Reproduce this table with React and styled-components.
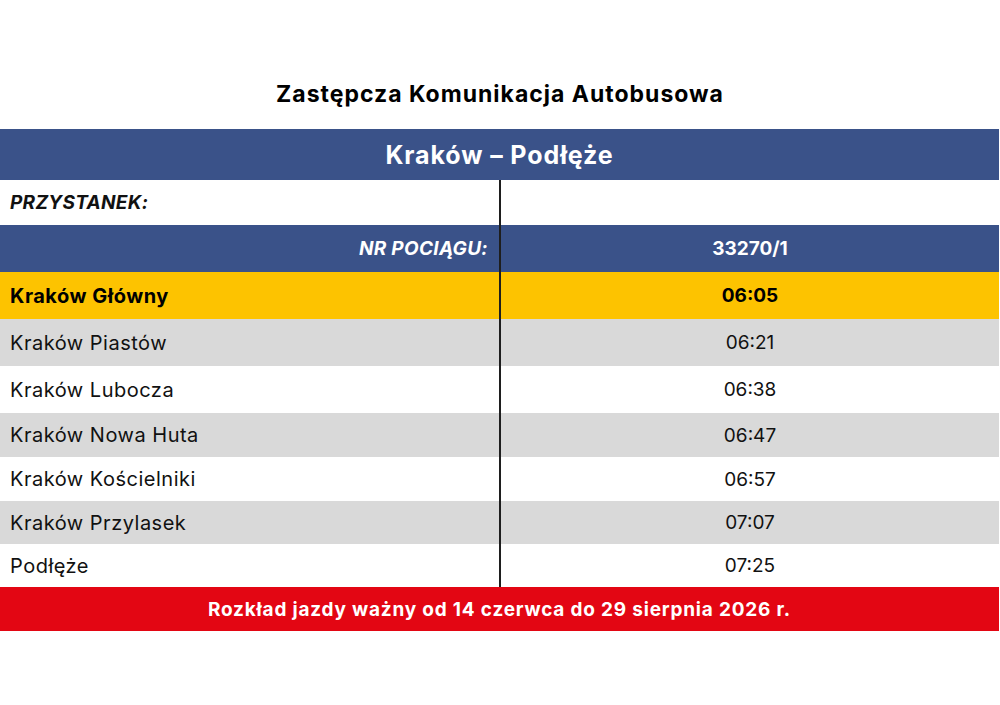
import React from 'react';
import styled, { createGlobalStyle } from 'styled-components';

const GlobalStyle = createGlobalStyle`
  body {
    margin: 0;
    background: #ffffff;
    font-family: 'Inter', 'Liberation Sans', sans-serif;
    color: #111111;
  }
`;

const blue = '#3a5289';
const yellow = '#fdc300';
const grey = '#d9d9d9';
const red = '#e30613';

const Page = styled.div`
  padding-top: 79px;
  width: 1000px;
`;

const Title = styled.h1`
  margin: 0 0 20px;
  height: 30px;
  line-height: 30px;
  font-size: 23px;
  letter-spacing: 1px;
  font-weight: 700;
  text-align: center;
  color: #000000;
`;

const Table = styled.div`
  width: 999px;
  display: flex;
  flex-direction: column;
`;

const Banner = styled.div`
  height: ${(p) => p.height}px;
  display: flex;
  align-items: center;
  justify-content: center;
  background: ${(p) => p.bg};
  color: #ffffff;
  font-weight: 700;
  font-size: ${(p) => p.size}px;
  letter-spacing: ${(p) => p.spacing}px;
`;

const Row = styled.div`
  height: ${(p) => p.height}px;
  display: flex;
  background: ${(p) => p.bg};
  color: ${(p) => p.color || '#111111'};
  font-weight: ${(p) => (p.bold ? 700 : 400)};
  font-size: 19px;
`;

const StopCell = styled.div`
  width: 501px;
  box-sizing: border-box;
  border-right: 2px solid #1e1e1e;
  display: flex;
  align-items: center;
  justify-content: ${(p) => (p.right ? 'flex-end' : 'flex-start')};
  padding: 0 ${(p) => (p.right ? 11 : 10)}px 0 10px;
  font-size: ${(p) => (p.label ? 19 : 20)}px;
  letter-spacing: ${(p) => (p.label ? 0.3 : 0.5)}px;
  font-style: ${(p) => (p.label ? 'italic' : 'normal')};
`;

const TimeCell = styled.div`
  flex: 1;
  display: flex;
  align-items: center;
  justify-content: center;
`;

const stops = [
  { name: 'Kraków Piastów', time: '06:21', height: 47 },
  { name: 'Kraków Lubocza', time: '06:38', height: 47 },
  { name: 'Kraków Nowa Huta', time: '06:47', height: 44 },
  { name: 'Kraków Kościelniki', time: '06:57', height: 44 },
  { name: 'Kraków Przylasek', time: '07:07', height: 43 },
  { name: 'Podłęże', time: '07:25', height: 43 },
];

export default function App() {
  return (
    <Page>
      <GlobalStyle />
      <Title>Zastępcza Komunikacja Autobusowa</Title>
      <Table>
        <Banner bg={blue} height={51} size={25} spacing={0.9}>
          Kraków – Podłęże
        </Banner>
        <Row bg="#ffffff" height={45} bold>
          <StopCell label>PRZYSTANEK:</StopCell>
          <TimeCell />
        </Row>
        <Row bg={blue} height={47} color="#ffffff" bold>
          <StopCell label right>
            NR POCIĄGU:
          </StopCell>
          <TimeCell>33270/1</TimeCell>
        </Row>
        <Row bg={yellow} height={47} color="#000000" bold>
          <StopCell>Kraków Główny</StopCell>
          <TimeCell>06:05</TimeCell>
        </Row>
        {stops.map((s, i) => (
          <Row key={s.name} bg={i % 2 === 0 ? grey : '#ffffff'} height={s.height}>
            <StopCell>{s.name}</StopCell>
            <TimeCell>{s.time}</TimeCell>
          </Row>
        ))}
        <Banner bg={red} height={44} size={19} spacing={0.8}>
          Rozkład jazdy ważny od 14 czerwca do 29 sierpnia 2026 r.
        </Banner>
      </Table>
    </Page>
  );
}
